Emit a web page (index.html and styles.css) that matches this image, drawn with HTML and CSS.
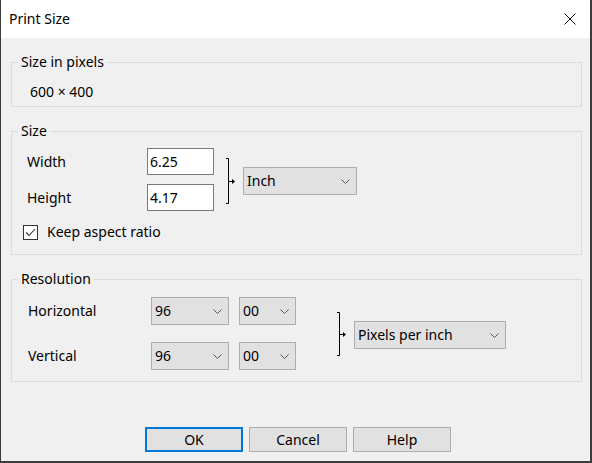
FILE: index.html
```html
<!DOCTYPE html>
<html>
<head>
<meta charset="utf-8">
<link rel="stylesheet" href="styles.css">
</head>
<body>
<div class="window">
  <div class="titlebar">
    <span class="title">Print Size</span>
    <svg class="close" width="12" height="12" viewBox="0 0 12 12"><path d="M0.5 0.5 L11.5 11.5 M11.5 0.5 L0.5 11.5" stroke="#111" stroke-width="1" fill="none"/></svg>
  </div>
  <div class="content">
    <fieldset class="group g1">
      <legend>Size in pixels</legend>
      <div class="pixels">600 × 400</div>
    </fieldset>

    <fieldset class="group g2">
      <legend>Size</legend>
      <div class="size-row">
        <div class="fields">
          <span class="lbl">Width</span><div class="input">6.25</div>
          <span class="lbl">Height</span><div class="input">4.17</div>
        </div>
        <svg class="link link-a" width="10" height="46" viewBox="0 0 10 46"><path d="M0 0.5 H2.5 V45.5 H0" stroke="#000" fill="none"/><path d="M2.5 23.5 H6.5" stroke="#000"/><path d="M6 21 L9 23.5 L6 26 Z" fill="#000"/></svg>
        <div class="combo unit">
          <span>Inch</span>
          <svg width="9" height="5" viewBox="0 0 9 5"><polyline points="0.5,0.5 4.5,4.5 8.5,0.5" stroke="#555" fill="none"/></svg>
        </div>
      </div>
      <div class="check-row">
        <span class="checkbox"><svg width="13" height="13" viewBox="0 0 13 13"><polyline points="2,6.5 5,9.5 11,3" stroke="#333" stroke-width="1.1" fill="none"/></svg></span>
        <span>Keep aspect ratio</span>
      </div>
    </fieldset>

    <fieldset class="group g3">
      <legend>Resolution</legend>
      <div class="res-row">
        <div class="res-fields">
          <span class="lbl">Horizontal</span>
          <div class="combo c1"><span>96</span><svg width="9" height="5" viewBox="0 0 9 5"><polyline points="0.5,0.5 4.5,4.5 8.5,0.5" stroke="#555" fill="none"/></svg></div>
          <div class="combo c2"><span>00</span><svg width="9" height="5" viewBox="0 0 9 5"><polyline points="0.5,0.5 4.5,4.5 8.5,0.5" stroke="#555" fill="none"/></svg></div>
          <span class="lbl">Vertical</span>
          <div class="combo c1"><span>96</span><svg width="9" height="5" viewBox="0 0 9 5"><polyline points="0.5,0.5 4.5,4.5 8.5,0.5" stroke="#555" fill="none"/></svg></div>
          <div class="combo c2"><span>00</span><svg width="9" height="5" viewBox="0 0 9 5"><polyline points="0.5,0.5 4.5,4.5 8.5,0.5" stroke="#555" fill="none"/></svg></div>
        </div>
        <svg class="link link-b" width="10" height="44" viewBox="0 0 10 44"><path d="M0 0.5 H2.5 V43.5 H0" stroke="#000" fill="none"/><path d="M2.5 22.5 H6.5" stroke="#000"/><path d="M6 20 L9 22.5 L6 25 Z" fill="#000"/></svg>
        <div class="combo ppi">
          <span>Pixels per inch</span>
          <svg width="9" height="5" viewBox="0 0 9 5"><polyline points="0.5,0.5 4.5,4.5 8.5,0.5" stroke="#555" fill="none"/></svg>
        </div>
      </div>
    </fieldset>
  </div>
  <div class="buttons">
    <div class="btn default">OK</div>
    <div class="btn">Cancel</div>
    <div class="btn">Help</div>
  </div>
</div>
</body>
</html>
```
FILE: styles.css
```css
html, body {
  margin: 0;
  padding: 0;
  background: #f0f0f0;
}
.window {
  width: 592px;
  height: 463px;
  box-sizing: border-box;
  border-left: 1px solid #3c3c3c;
  border-right: 2px solid #3c3c3c;
  border-bottom: 2px solid #3c3c3c;
  background: #f0f0f0;
  display: flex;
  flex-direction: column;
  font: 14px/20px "Noto Sans", sans-serif;
  color: #000;
}
.titlebar {
  height: 38px;
  flex: none;
  background: #fff;
  display: flex;
  align-items: center;
  justify-content: space-between;
  padding: 0 14px 0 8px;
}
.title {
  font-size: 14px;
}
.close {
  display: block;
}
.content {
  padding: 14px 8px 0 10px;
  display: flex;
  flex-direction: column;
}
.group {
  margin: 0;
  padding: 0;
  min-width: 0;
  border: 1px solid #dcdcdc;
}
.group legend {
  margin-left: 6px;
  padding: 0 3px;
  line-height: 20px;
}
.g2 {
  margin-top: 14px;
}
.g3 {
  margin-top: 14px;
}
.pixels {
  padding: 10px 0 4px 18px;
}
.size-row {
  display: flex;
  align-items: center;
  padding: 7px 0 0 15px;
}
.fields {
  display: grid;
  grid-template-columns: 120px 67px;
  row-gap: 9px;
  align-items: center;
}
.input {
  box-sizing: border-box;
  height: 27px;
  border: 1px solid #7a7a7a;
  background: #fff;
  padding: 0 2px;
  line-height: 25px;
}
.link {
  display: block;
  flex: none;
}
.link-a {
  margin-left: 12px;
  margin-top: 3px;
}
.combo {
  box-sizing: border-box;
  height: 28px;
  border: 1px solid #adadad;
  background: #e1e1e1;
  display: flex;
  align-items: center;
  justify-content: space-between;
  padding: 0 6px 0 3px;
}
.combo svg {
  display: block;
}
.unit {
  width: 114px;
  margin-left: 7px;
  margin-top: 3px;
}
.check-row {
  display: flex;
  align-items: center;
  gap: 9px;
  padding: 11px 0 12px 11px;
}
.checkbox {
  box-sizing: border-box;
  width: 15px;
  height: 15px;
  border: 1px solid #333;
  background: #fff;
  display: flex;
}
.res-row {
  display: flex;
  align-items: center;
  padding: 8px 0 11px 16px;
}
.res-fields {
  display: grid;
  grid-template-columns: 113px 78px 57px;
  column-gap: 10px;
  row-gap: 17px;
  align-items: center;
}
.link-b {
  margin-left: 41px;
  margin-top: 1px;
}
.ppi {
  width: 152px;
  margin-left: 7px;
  margin-top: 3px;
}
.buttons {
  margin-top: 45px;
  display: flex;
  justify-content: center;
  gap: 6px;
  padding-left: 5px;
}
.btn {
  box-sizing: border-box;
  width: 98px;
  height: 25px;
  border: 1px solid #adadad;
  background: #e1e1e1;
  text-align: center;
  line-height: 23px;
}
.btn.default {
  border: 2px solid #0078d7;
  line-height: 21px;
}
```
